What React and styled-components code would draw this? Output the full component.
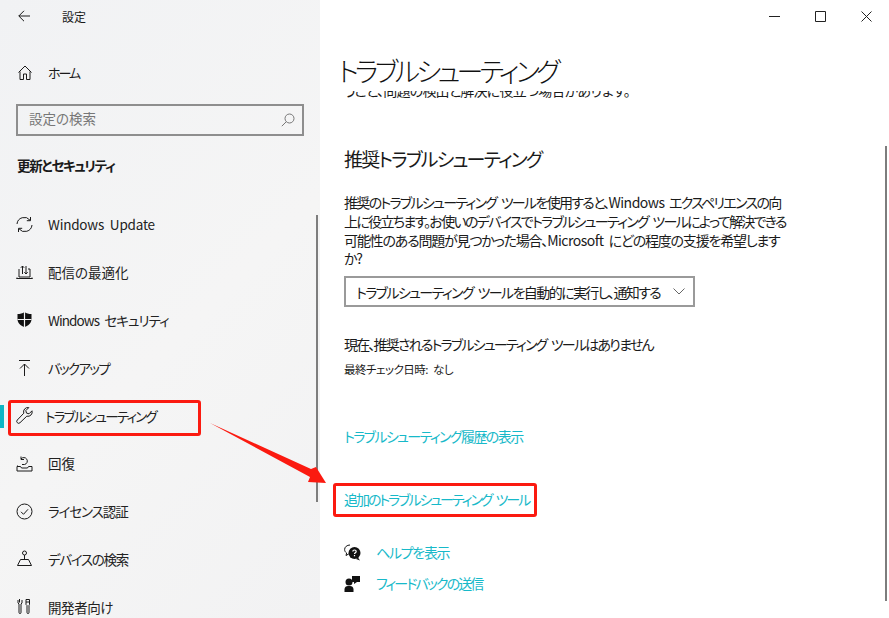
import React from 'react'
import styled, { createGlobalStyle } from 'styled-components'

const GlobalStyle = createGlobalStyle`
  html, body {
    margin: 0;
    padding: 0;
    background: #fff;
  }
  body {
    font-family: "Noto Sans CJK JP", "Noto Sans", sans-serif;
    font-feature-settings: "palt";
    word-spacing: 3px;
    color: #1a1a1a;
  }
`

const ui = {
  Window: styled.div`
    position: relative;
    display: flex;
    width: 889px;
    height: 618px;
    overflow: hidden;
  `,
  Sidebar: styled.aside`
    width: 320px;
    flex: none;
    box-sizing: border-box;
    background: linear-gradient(135deg, #f1f2f4 0%, #f5f5f5 55%, #f2f2f3 100%);
    overflow: hidden;
  `,
  TitleBar: styled.div`
    display: flex;
    align-items: center;
    gap: 32px;
    height: 32px;
    padding-left: 18px;
  `,
  AppTitle: styled.span`
    font-size: 12px;
  `,
  HomeRow: styled.div`
    display: flex;
    align-items: center;
    gap: 16px;
    height: 48px;
    margin-top: 16px;
    padding-left: 18px;
    font-size: 13px;
    letter-spacing: -2px;
  `,
  SearchBox: styled.div`
    display: flex;
    align-items: center;
    justify-content: space-between;
    box-sizing: border-box;
    width: 288px;
    height: 32px;
    margin: 8px 0 0 16px;
    padding: 0 7px 4px 11px;
    border: 2px solid #8e8e8e;
    font-size: 13.5px;
    color: #777;
  `,
  SearchIcon: styled.svg`
    position: relative;
    top: 2px;
  `,
  SectionLabel: styled.div`
    margin: 19px 0 0 17px;
    font-size: 13.5px;
    line-height: 20px;
    font-weight: 700;
    letter-spacing: -1.3px;
  `,
  NavList: styled.nav`
    margin-top: 25.5px;
  `,
  NavItem: styled.div`
    display: flex;
    align-items: center;
    gap: ${(p) => (p.$active ? '12px' : '15px')};
    height: 47.8px;
    padding-left: 16px;
    font-size: 13.5px;
    letter-spacing: ${(p) => p.$tracking}px;
    color: #222;
  `,
  IconSlot: styled.span`
    display: flex;
    justify-content: center;
    width: 17px;
    flex: none;
  `,
  AccentBar: styled.span`
    position: absolute;
    left: 0;
    top: 405px;
    width: 4px;
    height: 23px;
    background: #0fb5c4;
  `,
  Main: styled.main`
    flex: 1;
    min-width: 0;
    background: #fff;
    padding-left: 24px;
  `,
  WindowButtons: styled.div`
    display: flex;
    justify-content: flex-end;
    align-items: center;
    gap: 35px;
    height: 32px;
    padding-right: 17px;
  `,
  PageTitle: styled.h1`
    margin: 19px 0 0 -6px;
    font-size: 27px;
    line-height: 40px;
    font-weight: 300;
    letter-spacing: -3.7px;
    white-space: nowrap;
    color: #111;
  `,
  ClippedLine: styled.div`
    height: 8px;
    overflow: hidden;
    font-size: 14px;
    line-height: 19px;
    letter-spacing: -0.8px;
  `,
  ClippedText: styled.div`
    margin-top: -10px;
  `,
  SectionTitle: styled.h2`
    margin: 47px 0 0;
    font-size: 19px;
    line-height: 26px;
    font-weight: 400;
    letter-spacing: -1.8px;
    color: #1a1a1a;
  `,
  Body: styled.div`
    margin-top: 21px;
    font-size: 14px;
    line-height: 18.8px;
    white-space: nowrap;
    color: #1a1a1a;
  `,
  BodyLine: styled.div`
    letter-spacing: ${(p) => p.$tracking}px;
  `,
  Latin: styled.span`
    letter-spacing: -0.5px;
  `,
  Select: styled.div`
    display: flex;
    align-items: center;
    justify-content: space-between;
    box-sizing: border-box;
    width: 351px;
    height: 31px;
    margin-top: 8px;
    padding: 0 8px 0 10px;
    border: 2px solid #9a9a9a;
    font-size: 14px;
    letter-spacing: -1.6px;
    white-space: nowrap;
  `,
  Status: styled.div`
    margin-top: 27px;
    font-size: 14px;
    line-height: 20px;
    letter-spacing: -1.8px;
  `,
  LastCheck: styled.div`
    margin-top: 6px;
    font-size: 11.5px;
    line-height: 18px;
    letter-spacing: -0.5px;
  `,
  LinkList: styled.div`
    display: flex;
    flex-direction: column;
    gap: 43px;
    margin-top: 48px;
  `,
  Link: styled.a`
    font-size: 14px;
    line-height: 20px;
    letter-spacing: ${(p) => p.$tracking}px;
    color: #17b9c9;
  `,
  HelpList: styled.div`
    display: flex;
    flex-direction: column;
    gap: 11px;
    margin-top: 33px;
  `,
  HelpRow: styled.div`
    display: flex;
    align-items: center;
    gap: 15px;
    height: 20px;
  `,
  Scrollbar: styled.span`
    position: absolute;
    left: ${(p) => p.$left}px;
    top: ${(p) => p.$top}px;
    width: 2px;
    height: ${(p) => p.$height}px;
    background: #7d7d7d;
  `,
  Highlight: styled.span`
    position: absolute;
    left: ${(p) => p.$left}px;
    top: ${(p) => p.$top}px;
    width: ${(p) => p.$width}px;
    height: ${(p) => p.$height}px;
    box-sizing: border-box;
    border: 3px solid #fb1a10;
    border-radius: 3px;
  `,
  Arrow: styled.svg`
    position: absolute;
    left: 205px;
    top: 418px;
  `,
}

const Icon = ({ size = 17, children, sw = 1 }) => (
  <svg width={size} height={size} viewBox="0 0 17 17" fill="none" stroke="#1a1a1a" strokeWidth={sw}>
    {children}
  </svg>
)

const navItems = [
  {
    label: 'Windows Update',
    tracking: -0.2,
    icon: (
      <Icon>
        <path d="M1 8A7.300 7.300 0 0 1 14 4.200M16 9A7.300 7.300 0 0 1 3 12.800" />
        <path d="M14.500 1v3.700h-3.700M2.500 16v-3.700h3.700" />
      </Icon>
    ),
  },
  {
    label: '配信の最適化',
    tracking: 0,
    icon: (
      <Icon>
        <path d="M3 5v8h11V5h-2M.5 14.500h16M1 13.500l-.5 1M16 13.500l.5 1" />
        <path d="M6.500 10V2M4.800 3.800l1.700-1.800 1.700 1.800M10 2v8M8.300 8.200l1.700 1.800 1.700-1.800" />
      </Icon>
    ),
  },
  {
    label: 'Windows セキュリティ',
    tracking: -0.9,
    icon: (
      <svg width="17" height="17" viewBox="0 0 17 17" fill="#111">
        <path d="M8.500 1C6.600 2.400 4.200 3 1.500 3v5c0 4 3 6.600 7 8 4-1.400 7-4 7-8V3c-2.700 0-5.100-.6-7-2z" />
        <path d="M8.500 1v15M1.500 8.500h14" stroke="#f3f3f4" strokeWidth="1.200" />
      </svg>
    ),
  },
  {
    label: 'バックアップ',
    tracking: -1.7,
    icon: (
      <Icon>
        <path d="M3 1.500h11M8.500 17V5M4 9.500l4.500-4.500 4.500 4.500" />
      </Icon>
    ),
  },
  {
    label: 'トラブルシューティング',
    tracking: -1.7,
    active: true,
    icon: (
      <Icon>
        <path d="M16 3.800l-3 3-2.500-.7-.7-2.500 3-3a4.300 4.300 0 0 0-5 5.600L1.300 13a1.900 1.900 0 0 0 2.700 2.700l6.800-6.500A4.300 4.300 0 0 0 16 3.800z" />
      </Icon>
    ),
  },
  {
    label: '回復',
    tracking: 0,
    icon: (
      <Icon>
        <path d="M1 11.500h3.500l1 1.500h6l1-1.500H16V16H1zM1.500 11.500v-1" />
        <path d="M5 4A3.500 3.500 0 1 1 8.500 9.500H6M5 1.500V4.500h3" />
      </Icon>
    ),
  },
  {
    label: 'ライセンス認証',
    tracking: -1.1,
    icon: (
      <Icon>
        <circle cx="8.500" cy="8.500" r="7.500" />
        <path d="M5 8.800l2.500 2.500 4.500-5" />
      </Icon>
    ),
  },
  {
    label: 'デバイスの検索',
    tracking: -1.3,
    icon: (
      <Icon>
        <circle cx="8.500" cy="3" r="2" />
        <path d="M8.500 5v5M4.500 9.500h8l3 6h-14z" />
      </Icon>
    ),
  },
  {
    label: '開発者向け',
    tracking: -0.4,
    icon: (
      <Icon>
        <path d="M3.500 1v3.500M2 2v3l1 1v8.500a1 1 0 0 0 2 0V6l1-1V2M10 1.500h3.500v5l-.5 1v7a1 1 0 0 1-2 0v-7l-1-1zM10 4h3.500" />
      </Icon>
    ),
  },
]

const Page = () => (
  <ui.Window>
    <ui.Sidebar>
      <ui.TitleBar>
        <svg width="12" height="12" viewBox="0 0 12 12" fill="none" stroke="#1a1a1a" strokeWidth="1">
          <path d="M12 6H.8M6 .8L.8 6 6 11.200" />
        </svg>
        <ui.AppTitle>設定</ui.AppTitle>
      </ui.TitleBar>
      <ui.HomeRow>
        <svg width="14" height="15" viewBox="0 0 14 15" fill="none" stroke="#1a1a1a" strokeWidth="1">
          <path d="M.5 7.500L7 1l6.500 6.500M2 6.500v8h3.500V9h3v5.500H12v-8" />
        </svg>
        ホーム
      </ui.HomeRow>
      <ui.SearchBox>
        設定の検索
        <ui.SearchIcon width="14" height="14" viewBox="0 0 14 14" fill="none" stroke="#777" strokeWidth="1">
          <circle cx="8.500" cy="5.500" r="4.500" />
          <path d="M5.300 8.700L.8 13.200" />
        </ui.SearchIcon>
      </ui.SearchBox>
      <ui.SectionLabel>更新とセキュリティ</ui.SectionLabel>
      <ui.NavList>
        {navItems.map((item) => (
          <ui.NavItem key={item.label} $active={item.active} $tracking={item.tracking}>
            <ui.IconSlot>{item.icon}</ui.IconSlot>
            <span>{item.label}</span>
          </ui.NavItem>
        ))}
      </ui.NavList>
    </ui.Sidebar>

    <ui.Main>
      <ui.WindowButtons>
        <svg width="11" height="11" viewBox="0 0 11 11" stroke="#222" fill="none"><path d="M0 5.500h11" /></svg>
        <svg width="11" height="11" viewBox="0 0 11 11" stroke="#222" fill="none"><path d="M.5.500h10v10H.5z" /></svg>
        <svg width="11" height="11" viewBox="0 0 11 11" stroke="#222" fill="none"><path d="M.5.500l10 10M10.500.500l-10 10" /></svg>
      </ui.WindowButtons>
      <ui.PageTitle>トラブルシューティング</ui.PageTitle>
      <ui.ClippedLine>
        <ui.ClippedText>うこと、問題の検出と解決に役立つ場合があります。</ui.ClippedText>
      </ui.ClippedLine>
      <ui.SectionTitle>推奨トラブルシューティング</ui.SectionTitle>
      <ui.Body>
        <ui.BodyLine $tracking={-1.7}>推奨のトラブルシューティング ツールを使用すると、<ui.Latin>Windows</ui.Latin> エクスペリエンスの向</ui.BodyLine>
        <ui.BodyLine $tracking={-1.7}>上に役立ちます。お使いのデバイスでトラブルシューティング ツールによって解決できる</ui.BodyLine>
        <ui.BodyLine $tracking={-1.2}>可能性のある問題が見つかった場合、<ui.Latin>Microsoft</ui.Latin> にどの程度の支援を希望します</ui.BodyLine>
        <ui.BodyLine $tracking={-1.2}>か?</ui.BodyLine>
      </ui.Body>
      <ui.Select>
        <span>トラブルシューティング ツールを自動的に実行し、通知する</span>
        <svg width="12" height="7" viewBox="0 0 12 7" fill="none" stroke="#666" strokeWidth="1">
          <path d="M.5.500L6 6l5.500-5.500" />
        </svg>
      </ui.Select>
      <ui.Status>現在、推奨されるトラブルシューティング ツールはありません</ui.Status>
      <ui.LastCheck>最終チェック日時: なし</ui.LastCheck>
      <ui.LinkList>
        <ui.Link $tracking={-1.6}>トラブルシューティング履歴の表示</ui.Link>
        <ui.Link $tracking={-2.05}>追加のトラブルシューティング ツール</ui.Link>
      </ui.LinkList>
      <ui.HelpList>
        <ui.HelpRow>
          <svg width="17" height="17" viewBox="0 0 17 17">
            <path d="M6 1C3 1 .6 3 .6 5.500c0 1.500.8 2.700 2 3.500l-.6 2.500 2.800-1.600" fill="#fff" stroke="#111" />
            <circle cx="10.500" cy="9" r="6" fill="#111" />
            <path d="M14 13.500l2 3-4-1.500z" fill="#111" />
            <path d="M8.800 7.500c0-2 3.400-2 3.400 0 0 1.300-1.700 1.200-1.700 2.500M10.500 11v1.300" fill="none" stroke="#fff" strokeWidth="1.200" />
          </svg>
          <ui.Link $tracking={-1.3}>ヘルプを表示</ui.Link>
        </ui.HelpRow>
        <ui.HelpRow>
          <svg width="17" height="17" viewBox="0 0 17 17" fill="#111">
            <circle cx="5" cy="7" r="3.500" />
            <path d="M.5 17v-3a3.500 3.500 0 0 1 3.500-3h2a3.500 3.500 0 0 1 3.500 3v3z" />
            <path d="M8 1h8v6h-3l-3 2V7H8z" />
          </svg>
          <ui.Link $tracking={-1.9}>フィードバックの送信</ui.Link>
        </ui.HelpRow>
      </ui.HelpList>
    </ui.Main>

    <ui.AccentBar />
    <ui.Scrollbar $left={316} $top={215} $height={287} />
    <ui.Scrollbar $left={885} $top={146} $height={455} />
    <ui.Highlight $left={8} $top={400} $width={193} $height={36} />
    <ui.Highlight $left={333} $top={483} $width={204} $height={34} />
    <ui.Arrow width="125" height="70" viewBox="205 418 125 70">
      <polygon points="210,423 311,469 316,467 326,483 308,482 310,477" fill="#fb1a10" />
    </ui.Arrow>
  </ui.Window>
)

const App = () => (
  <>
    <GlobalStyle />
    <Page />
  </>
)

export default App
